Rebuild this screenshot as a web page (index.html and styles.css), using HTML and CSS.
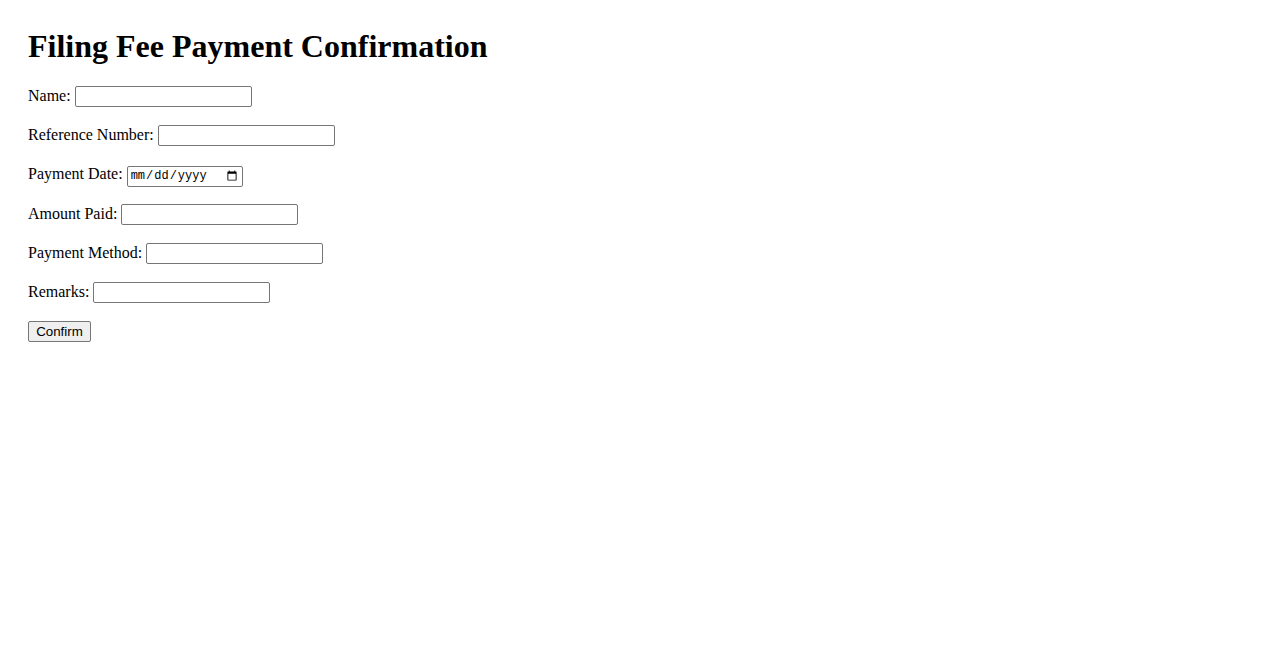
FILE: index.html
```html
<!DOCTYPE html>
<html>
<head>
<meta charset="utf-8">
<title>Filing Fee Payment Confirmation</title>
<link rel="stylesheet" href="styles.css">
</head>
<body>
<div class="page">
  <h1 class="title">Filing Fee Payment Confirmation</h1>
  <form class="form">
    <p class="row"><label>Name: <input class="field" type="text"></label></p>
    <p class="row"><label>Reference Number: <input class="field" type="text"></label></p>
    <p class="row row-date"><label>Payment Date: <input class="field date" type="date"></label></p>
    <p class="row"><label>Amount Paid: <input class="field" type="text"></label></p>
    <p class="row"><label>Payment Method: <input class="field" type="text"></label></p>
    <p class="row"><label>Remarks: <input class="field" type="text"></label></p>
    <p class="row"><button class="btn" type="button">Confirm</button></p>
  </form>
</div>
</body>
</html>
```
FILE: styles.css
```css
body {
  margin: 8px;
  font-family: "Liberation Serif", "Times New Roman", serif;
  font-size: 16px;
  color: #000;
  background: #fff;
}
.page {
  padding: 20px;
}
.title {
  font-size: 32px;
  font-weight: bold;
  margin: 0 0 19px;
  line-height: 37px;
}
.form {
  margin: 0;
}
.row {
  margin: 0 0 16px;
  line-height: 23px;
  height: 23px;
}
.row-date {
  height: 24px;
}
.field {
  box-sizing: border-box;
  width: 177px;
  height: 21px;
  border: 1px solid #767676;
  border-radius: 2px;
  padding: 1px 2px;
  font-family: "Liberation Sans", Arial, sans-serif;
  font-size: 13.33px;
  background: #fff;
  vertical-align: baseline;
}
.date {
  width: 116px;
  font-family: "Liberation Mono", "Courier New", monospace;
  font-size: 12px;
}
.btn {
  box-sizing: border-box;
  width: 63px;
  height: 21px;
  padding: 1px 6px;
  font-family: "Liberation Sans", Arial, sans-serif;
  font-size: 13.33px;
  color: #000;
  background: #efefef;
  border: 1px solid #767676;
  border-radius: 2px;
}
```
